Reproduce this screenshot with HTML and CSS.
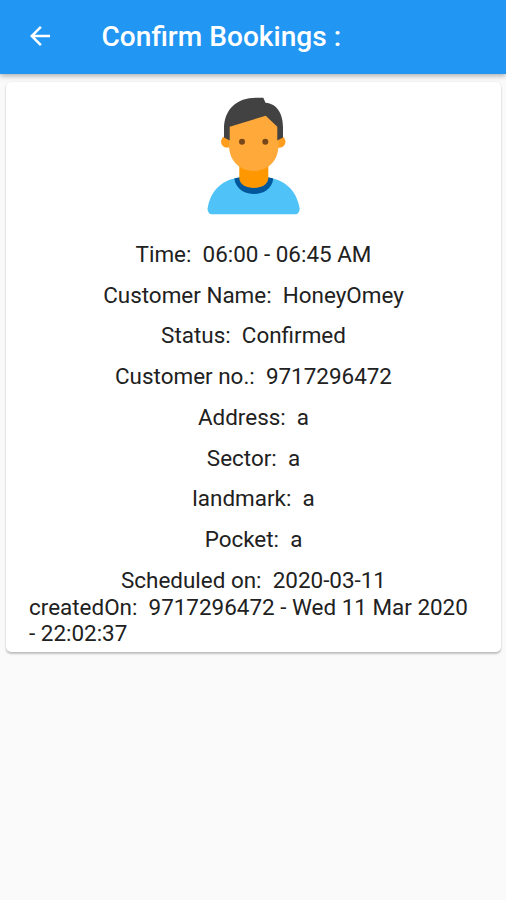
FILE: index.html
```html
<!DOCTYPE html>
<html lang="en">
<head>
<meta charset="utf-8">
<title>Confirm Bookings</title>
<link rel="stylesheet" href="styles.css">
</head>
<body>
<header class="app-bar">
  <svg class="back" viewBox="0 0 24 24" aria-hidden="true"><path d="M20 11H7.83l5.59-5.59L12 4l-8 8 8 8 1.41-1.41L7.83 13H20v-2z"/></svg>
  <h1 class="title">Confirm Bookings :</h1>
</header>
<main class="card">
  <svg class="avatar" viewBox="0 0 94 118" aria-hidden="true">
    <path fill="#4fc3f7" d="M5 117.300Q2 116.500 1.500 112C4 94 16 83 31 81h33c15 2 27 13 29.700 31q-.5 4.500-3.700 5.300z"/>
    <path fill="#01579b" d="M28.300 81.500l5-1.200h29l5 1.200C65 102.300 31 102.300 28.300 81.500z"/>
    <path fill="#ff9800" d="M33.300 66h29v15c0 13.300-29 13.300-29 0z"/>
    <circle fill="#ff9d1e" cx="21" cy="44.700" r="6"/>
    <circle fill="#ff9d1e" cx="73.500" cy="44.700" r="6"/>
    <path fill="#ffa93a" d="M23 28l36-14 13.500 14v20c0 34.700-49.500 34.700-49.500 0z"/>
    <path fill="#424242" d="M18 40.500V32C18 12 31 .7 50 .7h7.300l2.200 5C71 6.500 77 17 77 30v10.500l-5.700 3V29.700l-11.600-11-36 11v13.800z"/>
    <circle fill="#784719" cx="36" cy="44.700" r="3"/>
    <circle fill="#784719" cx="59.300" cy="44.700" r="3"/>
  </svg>
  <div class="details">
    <p class="row">Time:&nbsp; 06:00 - 06:45 AM</p>
    <p class="row">Customer Name:&nbsp; HoneyOmey</p>
    <p class="row">Status:&nbsp; Confirmed</p>
    <p class="row">Customer no.:&nbsp; 9717296472</p>
    <p class="row">Address:&nbsp; a</p>
    <p class="row">Sector:&nbsp; a</p>
    <p class="row">landmark:&nbsp; a</p>
    <p class="row">Pocket:&nbsp; a</p>
    <p class="row">Scheduled on:&nbsp; 2020-03-11</p>
  </div>
  <p class="created">createdOn:&nbsp; 9717296472 - Wed 11 Mar 2020 - 22:02:37</p>
</main>
</body>
</html>
```
FILE: styles.css
```css
* { box-sizing: border-box; }
body {
  margin: 0;
  min-height: 900px;
  background: #fafafa;
  color: #212121;
  font-family: Roboto, sans-serif;
}
.app-bar {
  display: flex;
  align-items: center;
  height: 74px;
  padding: 0 25px 2px;
  background: #2196f3;
  color: #fff;
  box-shadow: 0 2px 5px rgba(0, 0, 0, .3);
}
.back { width: 30px; height: 30px; fill: currentColor; }
.title { margin: 0 0 0 46.5px; font-size: 28.1px; font-weight: 500; white-space: nowrap; }
.card {
  display: flex;
  flex-direction: column;
  align-items: center;
  height: 570px;
  margin: 8px 5px 0 6px;
  padding-top: 15px;
  border-radius: 5px;
  background: #fff;
  box-shadow: 0 2px 2px rgba(0, 0, 0, .22), 0 0 2px rgba(0, 0, 0, .1);
}
.avatar { width: 94px; height: 118px; margin-right: 2px; flex: none; }
.details { padding-top: 25.8px; text-align: center; }
.row, .created { margin: 0; font-size: 22.45px; line-height: 26.7px; white-space: nowrap; }
.row + .row { margin-top: 14.05px; }
.created { width: 449px; white-space: normal; }
```
